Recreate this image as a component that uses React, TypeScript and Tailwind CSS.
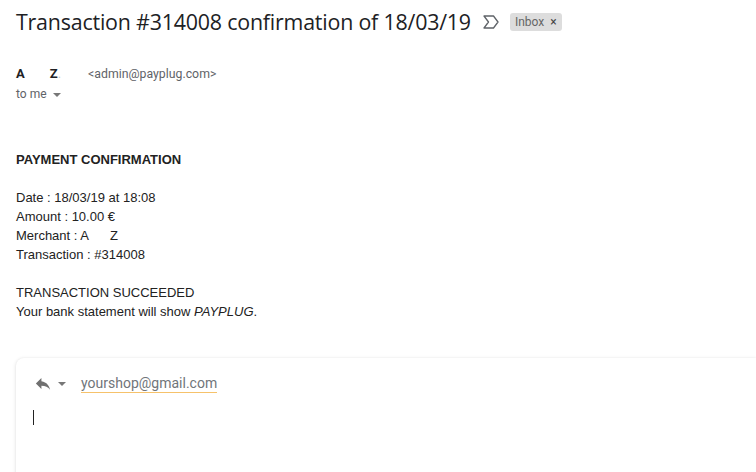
export default function App() {
  return (
    <div className="h-[472px] w-[756px] overflow-hidden bg-white font-['Roboto',sans-serif]">
      <div className="flex items-center pl-4 pt-[8px]">
        <h1 className="text-[21.4px] leading-[28px] font-normal text-[#202124] font-['Open_Sans','Roboto',sans-serif] tracking-[-0.2px]">
          Transaction #314008 confirmation of 18/03/19
        </h1>
        <svg className="ml-[12px] h-[14px] w-[16px]" viewBox="0 0 16 14" fill="none">
          <path d="M1 1h9.5l4.5 6-4.5 6H1l4.5-6z" stroke="#5f6368" strokeWidth="1.3" strokeLinejoin="round" />
        </svg>
        <span className="ml-[11px] flex h-[18px] items-center rounded-[3px] bg-[#dddddd] px-[5px] text-[12px] text-[#666666]">
          Inbox <span className="ml-[6px] text-[12px] text-[#444]">×</span>
        </span>
      </div>

      <div className="mt-[29px] pl-4">
        <div className="flex items-baseline text-[13px] leading-[17px]">
          <span className="font-bold text-[#202124]">A</span>
          <span className="ml-[25px] font-bold text-[#202124]">Z</span>
          <span className="text-[#ccc]">.</span>
          <span className="ml-[27px] text-[12.3px] text-[#5f6368]">&lt;admin@payplug.com&gt;</span>
        </div>
        <div className="mt-[3px] flex items-center text-[12px] leading-[17px] text-[#5f6368]">
          to me
          <span className="ml-[6px] inline-block h-0 w-0 border-x-[4px] border-t-[4px] border-x-transparent border-t-[#777]" />
        </div>
      </div>

      <div className="mt-[47px] pl-4 font-['Liberation_Sans',Arial,sans-serif] text-[13px] leading-[19px] text-[#222]">
        <div className="font-bold">PAYMENT CONFIRMATION</div>
        <div className="h-[19px]" />
        <div>Date : 18/03/19 at 18:08</div>
        <div>Amount : 10.00 €</div>
        <div className="whitespace-pre">Merchant : A      Z</div>
        <div>Transaction : #314008</div>
        <div className="h-[19px]" />
        <div>TRANSACTION SUCCEEDED</div>
        <div>
          Your bank statement will show <i>PAYPLUG</i>.
        </div>
      </div>

      <div className="ml-4 mt-[37px] h-[140px] rounded-tl-[8px] bg-white shadow-[0_1px_4px_rgba(0,0,0,0.12),0_0_2px_rgba(0,0,0,0.06)]">
        <div className="flex items-center pl-[17px] pt-[16px]">
          <svg className="h-[19px] w-[20px]" viewBox="0 0 24 24">
            <path d="M10 9V5l-7 7 7 7v-4.1c5 0 8.5 1.6 11 5.1-1-5-4-10-11-11z" fill="#707070" />
          </svg>
          <span className="ml-[5px] inline-block h-0 w-0 border-x-[4px] border-t-[4px] border-x-transparent border-t-[#777]" />
          <span className="ml-[15px] border-b border-[#f6c26b] text-[14px] leading-[17px] text-[#70757a]">
            yourshop@gmail.com
          </span>
        </div>
        <div className="ml-[17px] mt-[17px] h-[15px] w-px bg-[#222]" />
      </div>
    </div>
  );
}
